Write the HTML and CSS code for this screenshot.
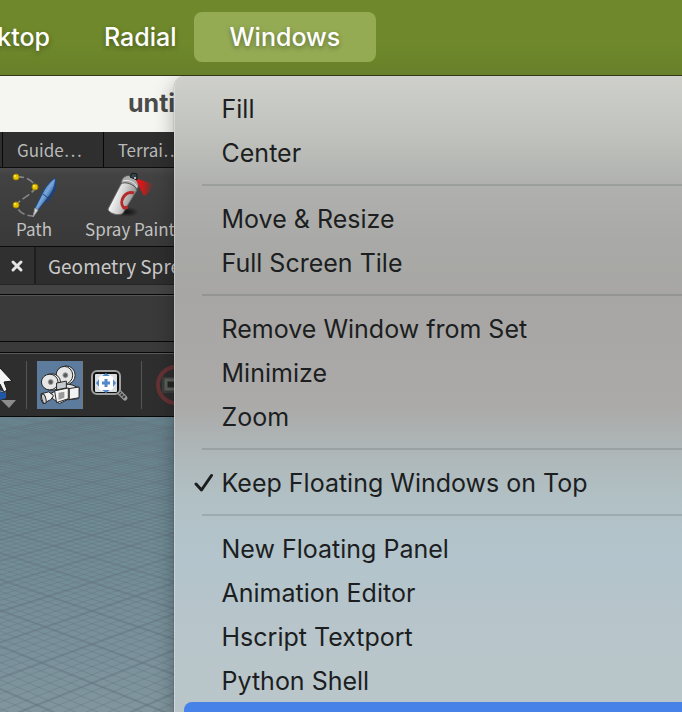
FILE: index.html
```html
<!DOCTYPE html>
<html lang="en">
<head>
  <meta charset="UTF-8" />
  <meta name="viewport" content="width=device-width, initial-scale=1.0"/>
  <title>untitled</title>
  <link rel="stylesheet" href="styles.css">
</head>
<body>
  <nav class="menubar">
    <button class="menu-title first">Desktop</button>
    <button class="menu-title">Radial</button>
    <div class="menu-holder">
      <button class="menu-title open" aria-expanded="true">Windows</button>
      <div class="menu" role="menu">
        <button class="menu-item" role="menuitem">Fill</button>
        <button class="menu-item" role="menuitem">Center</button>
        <hr>
        <button class="menu-item" role="menuitem">Move &amp; Resize</button>
        <button class="menu-item" role="menuitem">Full Screen Tile</button>
        <hr>
        <button class="menu-item" role="menuitem">Remove Window from Set</button>
        <button class="menu-item" role="menuitem">Minimize</button>
        <button class="menu-item" role="menuitem">Zoom</button>
        <hr>
        <button class="menu-item checked" role="menuitemcheckbox" aria-checked="true">
          <svg class="check" viewBox="0 0 20 20"><path d="M2 11 L7.500 17 L17.500 2.500" /></svg>Keep Floating Windows on Top
        </button>
        <hr>
        <button class="menu-item" role="menuitem">New Floating Panel</button>
        <button class="menu-item" role="menuitem">Animation Editor</button>
        <button class="menu-item" role="menuitem">Hscript Textport</button>
        <button class="menu-item" role="menuitem">Python Shell</button>
        <button class="menu-item active" role="menuitem" aria-label="Shell"></button>
      </div>
    </div>
  </nav>

  <main class="window">
    <h1 class="titlebar">untitled</h1>

    <div class="shelf-tabs">
      <button class="shelf-tab stub" aria-label="Previous shelf"></button>
      <button class="shelf-tab">Guide…</button>
      <button class="shelf-tab">Terrai…</button>
    </div>

    <div class="shelf">
      <button class="tool">
        <svg width="48" height="48" viewBox="0 0 48 48">
          <defs>
            <linearGradient id="pen" x1="0" y1="0" x2="1" y2="1">
              <stop offset=".3" stop-color="#2f67aa"/><stop offset=".5" stop-color="#7ba9dd"/><stop offset=".7" stop-color="#24559a"/>
            </linearGradient>
          </defs>
          <path d="M6 7 C16 6 24 11 25 17 C25 23 10 29 6 35 C8 42 15 46 23 46" fill="none" stroke="#858585" stroke-width="1.600" stroke-dasharray="8 3"/>
          <path d="M44 9 L45 12 V19 L37 32" fill="none" stroke="#1d4178" stroke-width="2"/>
          <path d="M45 8 C41 11 37 15 34 20 L25 38 L28 40 L40 25 C44 19 46 13 45 8Z" fill="url(#pen)" stroke="#1b4680"/>
          <path d="M25 38 L23 47 L28 40Z" fill="#d9dbe2" stroke="#999"/>
          <path d="M33 24 L38 28" stroke="#1d4178"/>
          <g fill="#e8c400" stroke="#a98a00"><circle cx="6" cy="7" r="3"/><circle cx="25" cy="17" r="3"/><circle cx="6" cy="35" r="3"/></g>
          <g fill="#fff06a"><circle cx="5" cy="6" r="1"/><circle cx="24" cy="16" r="1"/><circle cx="5" cy="34" r="1"/></g>
        </svg>
        <span>Path</span>
      </button>
      <button class="tool">
        <svg width="48" height="48" viewBox="-3 0 48 48">
          <defs>
            <linearGradient id="can" x1="0" y1="0" x2="1" y2=".4">
              <stop offset="0" stop-color="#8c8c8c"/><stop offset=".3" stop-color="#f5f5f5"/><stop offset=".6" stop-color="#d0d0d0"/><stop offset="1" stop-color="#858585"/>
            </linearGradient>
            <linearGradient id="mist"><stop offset="0" stop-color="#e81818"/><stop offset=".4" stop-color="#d01818"/><stop offset="1" stop-color="#d01818" stop-opacity=".05"/></linearGradient>
            <radialGradient id="floor"><stop offset="0" stop-color="#111"/><stop offset="1" stop-color="#111" stop-opacity="0"/></radialGradient>
          </defs>
          <ellipse cx="18" cy="42" rx="12" ry="5" fill="url(#floor)"/>
          <path d="M12 14 C14 9 27 13 28 20 L14 43 C10 47 -1 43 -1 39Z" fill="url(#can)" stroke="#666"/>
          <path d="M12 14 C12 7 18 4 23 6 C29 8 31 15 28 20 C26 14 15 11 12 14Z" fill="#aaa" stroke="#555"/>
          <path d="M14 11 C19 9 26 12 28 17" fill="none" stroke="#e8e8e8"/>
          <path d="M26 8 L44 14 Q41 23 35 26Z" fill="url(#mist)"/>
          <path d="M21 7 L23 3 L28 4 L28 10Z" fill="#34424a" stroke="#15191c"/>
          <circle cx="26" cy="8" r="1" fill="#d8e4e8"/>
          <path d="M25 23 C16 20 9 32 15 38 L19 37" fill="none" stroke="#b52a2a" stroke-width="3"/>
        </svg>
        <span>Spray Paint</span>
      </button>
    </div>

    <div class="pane-tabs">
      <button class="close" aria-label="Close tab"><svg width="14" height="14" viewBox="0 0 14 14"><path d="M3 3 L11 11 M11 3 L3 11"/></svg></button>
      <button class="pane-tab">Geometry Spreadsheet</button>
    </div>
    <div class="strip"></div>
    <div class="path-bar"></div>
    <div class="strip lower"></div>

    <div class="toolbar">
      <button class="tb select" aria-label="Select">
        <svg width="18" height="48" viewBox="0 0 18 48">
          <path d="M0 31 L6 32 V37 L0 39Z" fill="#1f58a5"/>
          <path d="M0 30 L6 31" stroke="#7ba8dd"/>
          <path d="M-6 0 L0 7 L12 20 L4 21 L7 29 L4 31 L0 23 L-6 27Z" fill="#f4f4f4" stroke="#181818"/>
          <path d="M1 39 H16 L9 47Z" fill="#8c8c8c"/>
        </svg>
      </button>
      <button class="tb view" aria-label="View">
        <svg width="45" height="48" viewBox="0 0 46 48">
          <g stroke="#222" stroke-linejoin="round">
            <path d="M23 21 L36 24 L43 27 L42 38 L32 39 L24 34Z" fill="#e4e4e4"/>
            <path d="M31 28 L43 26 V37 L32 39Z" fill="#f2f2f2"/>
            <path d="M15 32 L27 27 L33 28 V38 L23 43 L16 38Z" fill="#eee"/>
            <ellipse cx="30" cy="14" rx="9" ry="9.500" fill="#f3f3f3"/>
            <ellipse cx="28" cy="14" rx="8.500" ry="9" fill="#e6e6e6"/>
            <ellipse cx="15" cy="21" rx="9" ry="8.500" fill="#f3f3f3"/>
            <ellipse cx="13" cy="21" rx="8.500" ry="8" fill="#e6e6e6"/>
            <path d="M20 22 L30 20 V27 L20 29Z" fill="#c5cace"/>
            <path d="M18 30 L32 27 V38 L20 42Z" fill="#f5f5f5"/>
            <path d="M4 33 L12 31 L17 35 L14 39 L6 43 Q3 39 4 33Z" fill="#f2f2f2"/>
            <ellipse cx="7" cy="38" rx="2" ry="5" fill="#ccc" transform="rotate(-15 7 38)"/>
          </g>
          <path d="M22 32 L28 31 V37 L22 39Z" fill="#999"/>
          <g fill="#5a5a5a" stroke="#999"><circle cx="29" cy="14" r="2.500"/><circle cx="14" cy="21" r="2.500"/></g>
        </svg>
      </button>
      <button class="tb frame" aria-label="Frame view">
        <svg width="38" height="34" viewBox="0 0 38 34">
          <path d="M28 24 L34 30" stroke="#999" stroke-width="5" stroke-linecap="round"/>
          <path d="M28 24 L34 30" stroke="#333" stroke-width="2.500" stroke-dasharray="2 1"/>
          <rect x="1" y="3" width="28" height="23" rx="5" fill="#111" stroke="#a0a0a0" stroke-width="2"/>
          <rect x="4" y="6" width="22" height="18" rx="1" fill="#d7dde0"/>
          <circle cx="15" cy="15" r="9" fill="#fff"/>
          <g fill="#5288c6"><path d="M11 8 L15 5 L19 8Z M11 22 L15 25 L19 22Z M8 11 L5 15 L8 19Z M22 11 L25 15 L22 19Z"/><path d="M13.500 11 H16.500 V13.500 H19 V16.500 H16.500 V19 H13.500 V16.500 H11 V13.500 H13.500Z"/></g>
        </svg>
      </button>
      <button class="tb" aria-label="Camera lock">
        <svg width="46" height="46" viewBox="0 0 46 46">
          <circle cx="22" cy="23" r="18" fill="none" stroke="#653235" stroke-width="4"/>
          <rect x="8" y="15" width="30" height="16" fill="#3a3e3c"/>
          <rect x="12" y="18" width="22" height="9" fill="#252725" stroke="#5c605c" stroke-width="3"/>
        </svg>
      </button>
    </div>

    <div class="viewport">
      <svg id="grid" width="100%" height="100%"></svg>
    </div>
  </main>

  <script src="script.js"></script>
</body>
</html>
```
FILE: styles.css
```css
* {
  box-sizing: border-box;
}

body {
  margin: 0;
  height: 100vh;
  overflow: hidden;
  display: flex;
  flex-direction: column;
  background: #2d2d2d;
  font-family: 'Noto Sans CJK SC', 'Noto Sans', sans-serif;
}

button {
  border: none;
  background: none;
  margin: 0;
  padding: 0;
  font: inherit;
  color: inherit;
}

svg {
  display: block;
}

.menubar {
  flex: none;
  display: flex;
  padding: 12px 0 13px;
  background: linear-gradient(#6e882b 60%, #68802a);
  border-bottom: 1px solid #30351c;
  position: relative;
  z-index: 10;
}

.menu-title {
  height: 50px;
  padding: 0 17px 0 27px;
  font-family: Inter, sans-serif;
  font-size: 25px;
  font-weight: 500;
  color: white;
  text-shadow: 0 2px 5px rgba(0,0,0,0.35);
}

.menu-title.first {
  margin-left: -76px;
  padding-right: 27px;
}

.menu-holder {
  position: relative;
}

.menu-title.open {
  padding: 0 36px;
  border-radius: 8px;
  background: #94ab53;
}

.menu {
  position: absolute;
  top: 64px;
  left: -20px;
  width: calc(100vw - 173px);
  min-height: calc(100vh - 76px);
  padding: 10px 0 10px 9px;
  border-radius: 12px 0 0 12px;
  border-left: 1px solid rgba(255,255,255,0.3);
  background: linear-gradient(#cfd0ca, #c1c3be 55px, #b0b1af 110px, #a9aaa7 165px, #a7a6a4 220px, #a9a8a6 275px, #abaaa9 330px, #aeb5b6 370px, #b1c0c4 420px, #b3c4cc 480px, #b8c5ca 560px, #bac6c9);
  box-shadow: 0 0 1px rgba(0,0,0,0.7), 0 6px 20px rgba(0,0,0,0.3);
  clip-path: inset(0 0 0 -40px);
}

.menu-item {
  display: flex;
  align-items: center;
  width: 100%;
  height: 44px;
  padding: 2px 0 0 38px;
  border-radius: 8px 0 0 8px;
  font-family: Inter, sans-serif;
  font-size: 25px;
  color: #1c1e1f;
  text-align: left;
  white-space: nowrap;
}

.menu-item.checked {
  padding-left: 10px;
}

.check {
  width: 20px;
  height: 20px;
  margin-right: 8px;
  fill: none;
  stroke: #1c1e1f;
  stroke-width: 3;
  stroke-linecap: round;
  stroke-linejoin: round;
}

.menu-item.active {
  background: #4682e8;
}

.menu hr {
  height: 2px;
  margin: 10px 0 10px 18px;
  border: none;
  background: rgba(70,85,85,0.2);
}

.window {
  flex: 1;
  min-height: 0;
  display: flex;
  flex-direction: column;
}

.window > * {
  flex: none;
}

.titlebar {
  margin: 0;
  padding-left: 128px;
  height: 56px;
  line-height: 54px;
  background: #f5f6f2;
  font-family: Inter, sans-serif;
  font-size: 25px;
  font-weight: 700;
  color: #4b4b49;
}

.shelf-tabs {
  display: flex;
  height: 36px;
  background: #2e2f2e;
  border-bottom: 1px solid #0d0d0d;
  color: #b9b9b9;
  font-size: 17px;
}

.shelf-tab {
  padding: 0 21px 0 14px;
  border-right: 1px solid #080808;
}

.shelf-tab.stub {
  width: 3px;
  padding: 0;
}

.shelf {
  display: flex;
  gap: 27px;
  height: 79px;
  padding-left: 10px;
  background: linear-gradient(#4a4a4a, #424242 8px, #393939);
  border-bottom: 1px solid #0a0a0a;
  color: #c2c2c2;
  font-size: 17px;
}

.tool {
  display: flex;
  flex-direction: column;
  align-items: center;
  justify-content: flex-start;
  padding-top: 2px;
  min-width: 48px;
  line-height: 22px;
}

.pane-tabs {
  display: flex;
  height: 38px;
  background: #2e2e2e;
  border-bottom: 1px solid #242424;
  color: #c9c9c9;
  font-size: 19px;
}

.close {
  width: 36px;
  padding-left: 10px;
  border-right: 2px solid #1f1f1f;
  background: #303030;
}

.close path {
  stroke: #e6e6e6;
  stroke-width: 3;
  stroke-linecap: round;
}

.pane-tab {
  padding-left: 12px;
}

.strip {
  height: 10px;
  background: #444;
  border-bottom: 1px solid #080808;
}

.path-bar {
  height: 47px;
  background: #3a3a3a;
  border-top: 1px solid #555;
  border-bottom: 1px solid #080808;
}

.strip.lower {
  height: 11px;
  background: #3a3a3a;
}

.toolbar {
  display: flex;
  align-items: center;
  height: 64px;
  background: #2e2e2e;
  border-top: 1px solid #5a5a5a;
  border-bottom: 1px solid #080808;
}

.tb {
  display: flex;
  align-items: center;
  height: 48px;
  padding-left: 12px;
}

.tb.select {
  width: 27px;
  padding: 0;
  border-right: 1px solid #555;
}

.tb.view {
  padding: 0;
  margin-left: 10px;
  background: #5d7b9c;
  border-right: 1px solid #777;
}

.tb.frame {
  width: 59px;
  padding-left: 8px;
  border-right: 1px solid #555;
}

.window .viewport {
  flex: 1;
  min-height: 0;
  background: linear-gradient(#6a8791, #738d97 55%, #80959e);
}

#grid .minor {
  stroke: #5f707c;
  stroke-opacity: 0.35;
}

#grid .major {
  stroke: #647480;
  stroke-opacity: 0.5;
  stroke-width: 2;
}
```
FILE: script.js
```js
// Ground grid: two fans of lines, each meeting at its own vanishing point
const grid = document.getElementById('grid');
const center = { x: 92, y: 194 };
const horizon = -230;
const reach = 1240;
const step = 18;

function addLine(index, side) {
  const vx = center.x + side * reach;
  const x = center.x + index * step;
  const t = 1.5;
  const line = document.createElementNS('http://www.w3.org/2000/svg', 'line');
  line.setAttribute('x1', vx);
  line.setAttribute('y1', horizon);
  line.setAttribute('x2', vx + (x - vx) * t);
  line.setAttribute('y2', horizon + (center.y - horizon) * t);
  line.setAttribute('class', index % 5 === 0 ? 'major' : 'minor');
  grid.appendChild(line);
}

for (let i = -60; i <= 60; i++) {
  addLine(i, -1);
  addLine(i, 1);
}
```
